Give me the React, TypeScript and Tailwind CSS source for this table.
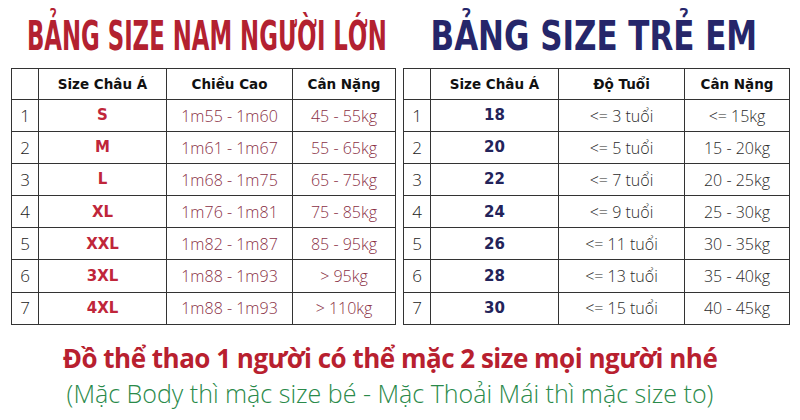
const adults = [
  { size: "S", height: "1m55 - 1m60", weight: "45 - 55kg" },
  { size: "M", height: "1m61 - 1m67", weight: "55 - 65kg" },
  { size: "L", height: "1m68 - 1m75", weight: "65 - 75kg" },
  { size: "XL", height: "1m76 - 1m81", weight: "75 - 85kg" },
  { size: "XXL", height: "1m82 - 1m87", weight: "85 - 95kg" },
  { size: "3XL", height: "1m88 - 1m93", weight: "> 95kg" },
  { size: "4XL", height: "1m88 - 1m93", weight: "> 110kg" },
];

const kids = [
  { size: "18", age: "<= 3 tuổi", weight: "<= 15kg" },
  { size: "20", age: "<= 5 tuổi", weight: "15 - 20kg" },
  { size: "22", age: "<= 7 tuổi", weight: "20 - 25kg" },
  { size: "24", age: "<= 9 tuổi", weight: "25 - 30kg" },
  { size: "26", age: "<= 11 tuổi", weight: "30 - 35kg" },
  { size: "28", age: "<= 13 tuổi", weight: "35 - 40kg" },
  { size: "30", age: "<= 15 tuổi", weight: "40 - 45kg" },
];

const cell = "border-[1.5px] border-[#333] text-center whitespace-nowrap";

const SizeTable = ({
  headers,
  rows,
  sizeColor,
  textColor,
  lastWidth,
}: {
  headers: string[];
  rows: string[][];
  sizeColor: string;
  textColor: string;
  lastWidth: string;
}) => (
  <table className="border-collapse table-fixed font-['DejaVu_Sans',sans-serif]">
    <colgroup>
      <col className="w-[27px]" />
      <col className="w-[128px]" />
      <col className="w-[126px]" />
      <col className={lastWidth} />
    </colgroup>
    <thead>
      <tr className="h-[31px]">
        <th className={cell}></th>
        {headers.map((h) => (
          <th key={h} className={`${cell} text-[13.5px] font-bold text-[#111]`}>
            {h}
          </th>
        ))}
      </tr>
    </thead>
    <tbody className="font-['Open_Sans',sans-serif]">
      {rows.map((r, i) => (
        <tr key={i} className="h-[32.1px]">
          <td className={`${cell} text-[17px] font-light text-[#222]`}>{i + 1}</td>
          <td className={`${cell} text-[15px] font-bold font-['DejaVu_Sans',sans-serif] ${sizeColor}`}>{r[0]}</td>
          <td className={`${cell} text-[16px] font-light ${textColor}`}>{r[1]}</td>
          <td className={`${cell} text-[16px] font-light ${textColor}`}>{r[2]}</td>
        </tr>
      ))}
    </tbody>
  </table>
);

export default function App() {
  return (
    <div className="w-[800px] h-[420px] bg-white overflow-hidden">
      <div className="flex h-[68px] items-center font-['DejaVu_Sans_Condensed',sans-serif] font-bold whitespace-nowrap">
        <div className="w-[400px] flex justify-center pl-[14px]">
          <h1 className="inline-block text-[40px] leading-none pt-[4px] text-[#b32130] scale-x-[0.634]">
            BẢNG SIZE NAM NGƯỜI LỚN
          </h1>
        </div>
        <div className="w-[400px] flex justify-center pr-[12px]">
          <h1 className="inline-block text-[40px] leading-none pt-[4px] text-[#26266a] scale-x-[0.86]">
            BẢNG SIZE TRẺ EM
          </h1>
        </div>
      </div>
      <div className="flex gap-[7px] pl-[11px]">
        <SizeTable
          headers={["Size Châu Á", "Chiều Cao", "Cân Nặng"]}
          rows={adults.map((a) => [a.size, a.height, a.weight])}
          sizeColor="text-[#c0263a]"
          textColor="text-[#8a2f45]"
          lastWidth="w-[103px]"
        />
        <SizeTable
          headers={["Size Châu Á", "Độ Tuổi", "Cân Nặng"]}
          rows={kids.map((k) => [k.size, k.age, k.weight])}
          sizeColor="text-[#23235a]"
          textColor="text-[#2b2b2b]"
          lastWidth="w-[105px]"
        />
      </div>
      <div className="flex flex-col items-center pt-[16px] pr-[20px] font-['Open_Sans',sans-serif] whitespace-nowrap">
        <p className="text-[26px] leading-[34px] font-bold text-[#b8202f] tracking-[-0.5px]">
          Đồ thể thao 1 người có thể mặc 2 size mọi người nhé
        </p>
        <p className="text-[25px] leading-[36px] font-light text-[#2a8a4a]">
          (Mặc Body thì mặc size bé - Mặc Thoải Mái thì mặc size to)
        </p>
      </div>
    </div>
  );
}
